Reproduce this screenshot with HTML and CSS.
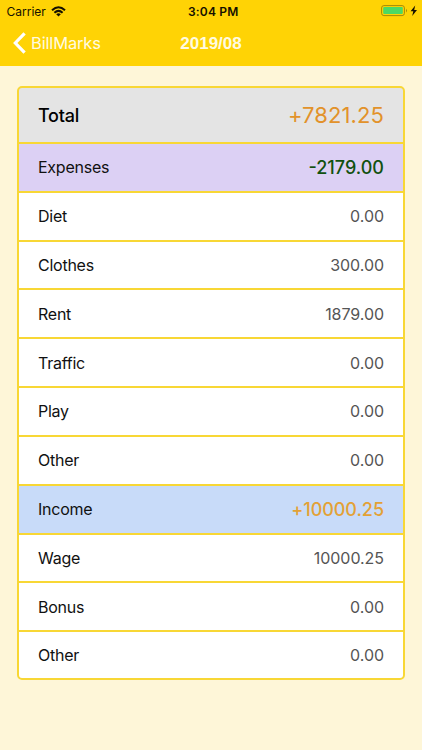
FILE: index.html
```html
<!DOCTYPE html>
<html lang="en">
<head>
<meta charset="utf-8">
<title>BillMarks</title>
<link rel="stylesheet" href="styles.css">
</head>
<body>
<header class="top">
  <div class="status">
    <div class="carrier"><span>Carrier</span>
      <svg width="15" height="11" viewBox="0 0 15 11" fill="none" stroke="#151000" stroke-width="2"><path d="M1 4.2Q7.5-1.8 14 4.2M3.4 6.7Q7.5 3 11.6 6.7"/><path d="M7.5 10.6 5.2 8.3Q7.5 6.3 9.8 8.3Z" fill="#151000" stroke="none"/></svg>
    </div>
    <div class="clock">3:04 PM</div>
    <div class="power">
      <svg width="37" height="12" viewBox="0 0 37 12"><rect x=".6" y=".6" width="22.8" height="10" rx="2.3" fill="none" stroke="#a58a08"/><rect x="2.2" y="2.1" width="19.6" height="7" rx="1" fill="#4cd964"/><path d="M25 3.8Q27 5.6 25 7.4Z" fill="#a58a08"/><path d="M34.2.5 29.6 6.2H32.3L31.2 10.9 36 4.9H33.2Z" fill="#151000"/></svg>
    </div>
  </div>
  <nav class="nav">
    <a class="back"><svg width="13" height="22" viewBox="0 0 13 22" fill="none" stroke="#fff" stroke-width="3.2"><path d="M11.6 1.3 2.3 11 11.6 20.7"/></svg><span>BillMarks</span></a>
    <h1 class="title">2019/08</h1>
  </nav>
</header>
<main class="card">
  <div class="row total"><span>Total</span><b>+7821.25</b></div>
  <div class="row expenses"><span>Expenses</span><b>-2179.00</b></div>
  <div class="row"><span>Diet</span><b>0.00</b></div>
  <div class="row"><span>Clothes</span><b>300.00</b></div>
  <div class="row"><span>Rent</span><b>1879.00</b></div>
  <div class="row"><span>Traffic</span><b>0.00</b></div>
  <div class="row"><span>Play</span><b>0.00</b></div>
  <div class="row"><span>Other</span><b>0.00</b></div>
  <div class="row income"><span>Income</span><b>+10000.25</b></div>
  <div class="row"><span>Wage</span><b>10000.25</b></div>
  <div class="row"><span>Bonus</span><b>0.00</b></div>
  <div class="row"><span>Other</span><b>0.00</b></div>
</main>
</body>
</html>
```
FILE: styles.css
```css
* { box-sizing: border-box; }
body {
  margin: 0;
  min-height: 750px;
  background: #fef6d8;
  color: #111;
  font-family: Inter, "Liberation Sans", sans-serif;
}
.top { height: 66px; background: #ffd305; }
.status {
  display: grid;
  grid-template-columns: 1fr auto 1fr;
  align-items: center;
  height: 22px;
  padding: 0 4px 0 6.5px;
  color: #151000;
  font-size: 12px;
}
.carrier { display: flex; align-items: center; gap: 5px; }
.clock { font-weight: 600; letter-spacing: .2px; margin-left: 2px; }
.power { display: flex; justify-content: flex-end; }
.nav {
  display: grid;
  grid-template-columns: 1fr auto 1fr;
  align-items: center;
  height: 42px;
  padding: 0 13px;
  color: #fffbe0;
}
.back { display: flex; align-items: center; gap: 5px; font-size: 16.5px; letter-spacing: -.15px; }
.title { margin: 0; padding-top: 2px; font: bold 17px "Liberation Sans", sans-serif; }
.card {
  display: grid;
  grid-template-rows: 54px repeat(10, 46.82px) 1fr;
  gap: 2px;
  width: 388px;
  height: 594px;
  margin: 20px 0 0 17px;
  border: 2px solid #f8d735;
  border-radius: 5px;
  background: #f8d735;
  overflow: hidden;
}
.row {
  display: flex;
  align-items: center;
  justify-content: space-between;
  padding: 0 19px;
  background: #fff;
  font-size: 16px;
  letter-spacing: -.25px;
}
.row b { color: #555; font-weight: 400; letter-spacing: -.05px; }
.total { background: #e4e4e4; color: #000; font-size: 18px; font-weight: 500; }
.expenses { background: #dcd0f4; }
.income { background: #c8dbf9; }
.total b { color: #e2922a; font-size: 22px; letter-spacing: .1px; }
.expenses b { color: #11510f; font-size: 18px; font-weight: 500; letter-spacing: 0; }
.income b { color: #e3a136; font-size: 18px; font-weight: 500; }
```
